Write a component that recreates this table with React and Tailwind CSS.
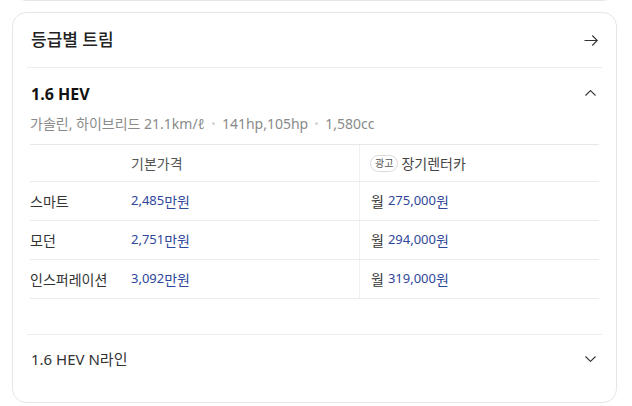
import React from "react";

const font = { fontFamily: "'Noto Sans', 'Noto Sans CJK KR', sans-serif" };

function ArrowRight() {
  return (
    <svg width="14" height="11" viewBox="0 0 14 11" fill="none" stroke="#333" strokeWidth="1.1">
      <path d="M0.5 5.5H13.3M8.3 0.5L13.3 5.5L8.3 10.5" />
    </svg>
  );
}

function ChevronUp() {
  return (
    <svg width="11" height="6" viewBox="0 0 11 6" fill="none" stroke="#333" strokeWidth="1.1">
      <path d="M0.5 5.5L5.5 0.6L10.5 5.5" />
    </svg>
  );
}

function ChevronDown() {
  return (
    <svg width="11" height="6" viewBox="0 0 11 6" fill="none" stroke="#333" strokeWidth="1.1">
      <path d="M0.5 0.5L5.5 5.4L10.5 0.5" />
    </svg>
  );
}

const rows = [
  { name: "스마트", price: "2,485", rent: "275,000" },
  { name: "모던", price: "2,751", rent: "294,000" },
  { name: "인스퍼레이션", price: "3,092", rent: "319,000" },
];

function Dot() {
  return <span className="mx-[7px] inline-block h-[3px] w-[3px] rounded-full bg-[#d4d4d4] align-middle" />;
}

export default function App() {
  return (
    <div className="h-[406px] w-[632px] overflow-hidden bg-white" style={font}>
      <div className="-mt-[29px] ml-[12px] mr-[15px] h-[30px] rounded-[14px] border border-[#e6e6e6]" />
      <div className="ml-[12px] mr-[15px] mt-[11px] h-[391px] rounded-[14px] border border-[#e6e6e6] px-[14px]">
        <div className="flex h-[55px] items-center justify-between border-b border-[#ececec] pl-[4px] pr-[4px]">
          <span className="text-[17px] font-medium text-[#222]">등급별 트림</span>
          <ArrowRight />
        </div>

        <div className="border-b border-[#ececec] pb-[35px]">
          <div className="mt-[16px] flex h-[20px] items-center justify-between pl-[4px] pr-[6px]">
            <span className="text-[16px] font-bold text-[#111]">1.6 HEV</span>
            <span className="-mt-[3px]"><ChevronUp /></span>
          </div>
          <div className="mt-[9px] flex h-[20px] items-center pl-[3px] text-[14px] text-[#8a8a8a]">
            <span>가솔린, 하이브리드 21.1km/ℓ</span>
            <Dot />
            <span>141hp,105hp</span>
            <Dot />
            <span>1,580cc</span>
          </div>

          <div className="mx-[3px] mt-[11px] border-t border-[#e8e8e8] text-[14px]">
            <div className="grid h-[37px] grid-cols-[101px_228px_1fr] border-b border-[#ececec]">
              <div />
              <div className="flex items-center text-[#555]">기본가격</div>
              <div className="flex items-center border-l border-[#f0f0f0] pl-[10px] text-[#444]">
                <span className="mr-[3px] inline-flex h-[17px] items-center rounded-full border border-[#dadada] px-[4px] text-[10px] text-[#555]">광고</span>
                <span>장기렌터카</span>
              </div>
            </div>
            {rows.map((r) => (
              <div key={r.name} className="grid h-[39px] grid-cols-[101px_228px_1fr] border-b border-[#ececec]">
                <div className="flex items-center text-[#333]">{r.name}</div>
                <div className="flex items-center text-[#2f479b]">
                  <span className="text-[13px]">{r.price}</span>
                  <span>만원</span>
                </div>
                <div className="flex items-center border-l border-[#f0f0f0] pl-[11px]">
                  <span className="text-[#333]">월</span>
                  <span className="ml-[4px] text-[13px] text-[#2f479b]">{r.rent}</span>
                  <span className="text-[#2f479b]">원</span>
                </div>
              </div>
            ))}
          </div>
        </div>

        <div className="flex h-[48px] items-center justify-between pl-[4px] pr-[6px]">
          <span className="text-[15px] text-[#333]">1.6 HEV N라인</span>
          <ChevronDown />
        </div>
      </div>
    </div>
  );
}
